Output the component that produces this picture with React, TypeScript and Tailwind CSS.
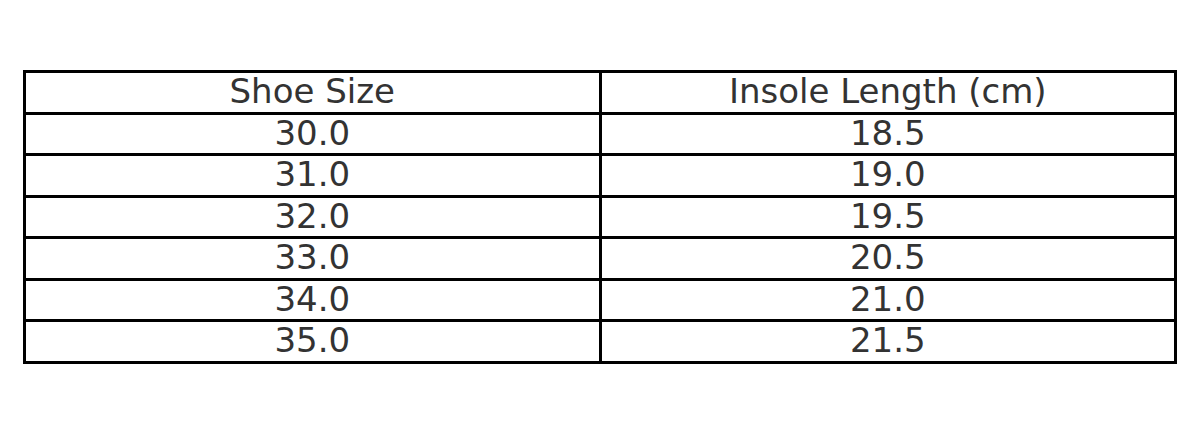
const rows = [
  ['30.0', '18.5'],
  ['31.0', '19.0'],
  ['32.0', '19.5'],
  ['33.0', '20.5'],
  ['34.0', '21.0'],
  ['35.0', '21.5'],
]

export default function App() {
  return (
    <div className="w-[1200px] h-[431px] bg-white pt-[70px] pl-[23px] font-['DejaVu_Sans',sans-serif]">
      <table className="w-[1154px] border-collapse table-fixed border-[3px] border-black text-[34px] text-[#333333]">
        <tbody>
          <tr>
            <td className="border-[3px] border-black text-center leading-[37.5px] pt-0 pb-[1px] px-0">Shoe Size</td>
            <td className="border-[3px] border-black text-center leading-[37.5px] pt-0 pb-[1px] px-0">Insole Length (cm)</td>
          </tr>
          {rows.map(([size, length]) => (
            <tr key={size}>
              <td className="border-[3px] border-black text-center leading-[37.5px] pt-0 pb-[1px] px-0">{size}</td>
              <td className="border-[3px] border-black text-center leading-[37.5px] pt-0 pb-[1px] px-0">{length}</td>
            </tr>
          ))}
        </tbody>
      </table>
    </div>
  )
}
